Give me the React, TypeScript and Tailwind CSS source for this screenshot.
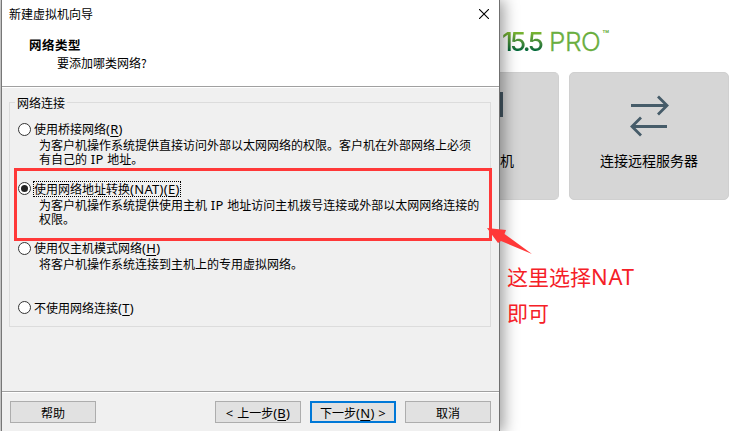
import type { ReactNode } from "react";

function Mnemonic({ children }: { children: string }) {
  return (
    <span className="font-['Noto_Sans',sans-serif] text-[13px] tracking-[0.3px]">
      (<span className="underline decoration-1 underline-offset-2">{children}</span>)
    </span>
  );
}

function Latin({ children }: { children: ReactNode }) {
  return <span className="font-['Noto_Sans',sans-serif] text-[13px] tracking-[0.3px]">{children}</span>;
}

function Option({
  label,
  letter,
  selected = false,
  children,
}: {
  label: ReactNode;
  letter: string;
  selected?: boolean;
  children?: ReactNode;
}) {
  return (
    <div className="h-[59.5px]">
      <div className="flex h-4 items-center">
        <span className="mr-[2px] flex size-[13px] shrink-0 items-center justify-center rounded-full border border-[#333] bg-white">
          {selected && <span className="size-[7px] rounded-full bg-[#222]" />}
        </span>
        <span
          className={
            "flex h-4 items-center px-px leading-4 whitespace-pre" +
            (selected ? " outline-1 outline-dotted outline-black -outline-offset-1" : "")
          }
        >
          {label}
          <Mnemonic>{letter}</Mnemonic>
        </span>
      </div>
      <div className="pt-px pl-[21px] leading-[14px] whitespace-pre">{children}</div>
    </div>
  );
}

function Button({ primary = false, children }: { primary?: boolean; children: ReactNode }) {
  return (
    <button
      className={
        "flex h-[22px] w-[86px] items-center justify-center bg-[#e1e1e1] pt-[2px] leading-4 whitespace-pre " +
        (primary ? "border-2 border-[#0078d7]" : "border border-[#adadad]")
      }
    >
      {children}
    </button>
  );
}

function Dialog() {
  return (
    <section className="relative z-10 flex h-[433px] w-[499px] shrink-0 flex-col border-x border-[#707070] border-l-[#777] bg-[#f0f0f0] shadow-[4px_0_14px_rgba(0,0,0,0.38)]">
      <header className="h-[86px] bg-white">
        <div className="flex h-7 items-center justify-between pr-[10px] pl-[7px]">
          <span>新建虚拟机向导</span>
          <svg className="size-[10px]" viewBox="0 0 10 10" stroke="#000" strokeWidth="1.1">
            <path d="M0 0L10 10M10 0L0 10" />
          </svg>
        </div>
        <h1 className="mt-[9px] pl-[27px] text-[12.5px] font-bold tracking-[0.5px] leading-4">网络类型</h1>
        <p className="mt-[2px] pl-[55px] leading-4">要添加哪类网络?</p>
      </header>
      <div className="h-[2px] border-t border-[#a0a0a0] bg-white" />
      <main className="h-[303px] pr-[8px] pl-[7px] pt-[14px]">
        <div className="h-[225px] border border-[#dcdcdc] pl-2">
          <div className="-mt-[8px] -ml-[3px] w-fit bg-[#f0f0f0] px-[2px] leading-4">网络连接</div>
          <div className="pt-[10px]">
            <Option label="使用桥接网络" letter="R">
              为客户机操作系统提供直接访问外部以太网网络的权限。客户机在外部网络上必须{"\n"}有自己的
              <Latin> IP </Latin>地址。
            </Option>
            <Option label={<>使用网络地址转换<Latin>(NAT)</Latin></>} letter="E" selected>
              为客户机操作系统提供使用主机<Latin> IP </Latin>地址访问主机拨号连接或外部以太网网络连接的{"\n"}权限。
            </Option>
            <Option label="使用仅主机模式网络" letter="H">
              将客户机操作系统连接到主机上的专用虚拟网络。
            </Option>
            <Option label="不使用网络连接" letter="T" />
          </div>
        </div>
      </main>
      <div className="h-[2px] shrink-0 border-t border-[#a0a0a0] bg-white" />
      <footer className="flex gap-[9px] pt-2 pl-[8px]">
        <div className="mr-[110px]">
          <Button>帮助</Button>
        </div>
        <Button><Latin>&lt; </Latin>上一步<Mnemonic>B</Mnemonic></Button>
        <Button primary>下一步<Mnemonic>N</Mnemonic><Latin> &gt;</Latin></Button>
        <Button>取消</Button>
      </footer>
    </section>
  );
}

export default function App() {
  return (
    <div className="relative flex h-[431px] w-[730px] overflow-hidden bg-white font-['Noto_Sans_CJK_SC',sans-serif] text-[12px] text-black">
      <div className="w-px shrink-0 bg-[#d8d8d8]" />
      <Dialog />
      <div className="flex w-[230px] shrink-0 flex-col">
        <div className="flex h-[72px] items-start pt-[25px] pl-[2px] font-['Inter',sans-serif] text-[26px] leading-[34px] whitespace-pre">
          <span className="w-[43px] bg-linear-to-b from-[#7db72f] from-20% to-[#006838] to-75% bg-clip-text font-medium tracking-[-2.7px] text-transparent">15.5</span>
          <span className="ml-[4px] font-light tracking-[-0.4px] text-[#6aae3f] [-webkit-text-stroke:0.3px_#6aae3f]">PRO</span>
          <span className="ml-[2px] text-[11px] font-semibold leading-[18px] text-[#6aae3f]">™</span>
        </div>
        <div className="flex gap-[10px]">
          <div className="h-[128px] w-[59px] rounded-r-[5px] border border-l-0 border-[#d0d0d0] bg-[#d6d6d6]">
            <div className="mt-[19px] h-[25px] w-[3px] bg-[#465966]" />
            <div className="mt-[33px] leading-5 text-[14px]">机</div>
          </div>
          <div className="flex h-[128px] w-[160px] flex-col items-center rounded-[5px] border border-[#d0d0d0] bg-[#d6d6d6]">
            <svg className="mt-[22px] h-[42px] w-[40px]" viewBox="0 0 40 42" fill="none" stroke="#465c69" strokeWidth="2.8">
              <path d="M2 10.5H38M29 1.5L38 10.5L29 19.5M38 31.5H3M12 22.5L3 31.5L12 40.5" />
            </svg>
            <span className="mt-[13px] leading-5 text-[14px]">连接远程服务器</span>
          </div>
        </div>
      </div>
      <div className="absolute top-[168px] left-[14px] z-20 h-[73px] w-[478px] border-3 border-[#ff3838]" />
      <svg className="absolute top-[226px] left-[486px] z-30 h-[30px] w-[48px]" viewBox="0 0 48 30" fill="#ff3838">
        <path d="M1 2L20 4L18.5 8L46 28L15 15L12 17Z" />
      </svg>
      <div className="absolute top-[258px] left-[507px] z-30 text-[21px] leading-9 text-[#f52027]">
        这里选择<span className="font-['Noto_Sans',sans-serif] text-[22px] tracking-[0.8px]">NAT</span>
        <br />
        即可
      </div>
    </div>
  );
}
